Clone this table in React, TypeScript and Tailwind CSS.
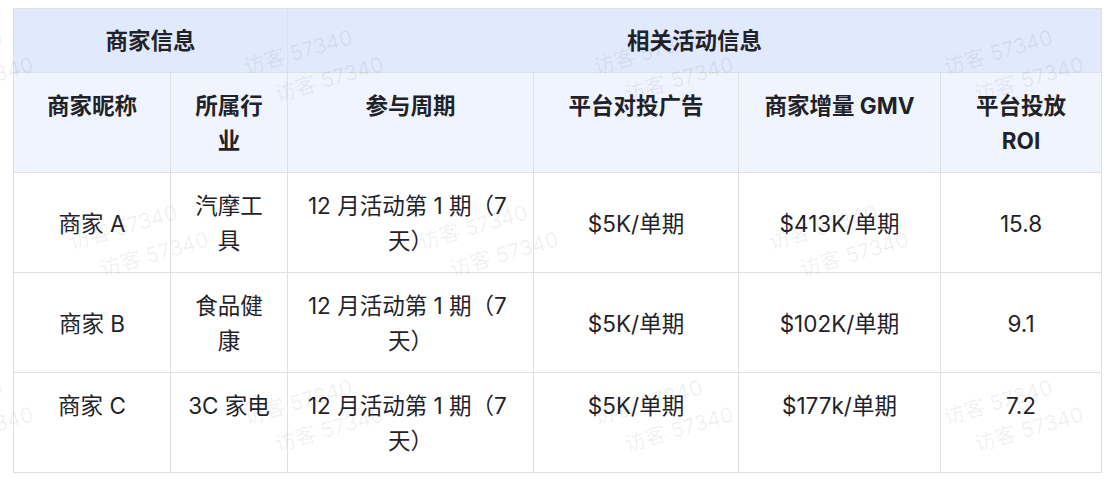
import React from "react";

const rows = [
  {
    name: "商家 A",
    industry: ["汽摩工", "具"],
    ad: "$5K/单期",
    gmv: "$413K/单期",
    roi: "15.8",
    align: "align-middle",
  },
  {
    name: "商家 B",
    industry: ["食品健", "康"],
    ad: "$5K/单期",
    gmv: "$102K/单期",
    roi: "9.1",
    align: "align-middle",
  },
  {
    name: "商家 C",
    industry: ["3C 家电"],
    ad: "$5K/单期",
    gmv: "$177k/单期",
    roi: "7.2",
    align: "align-top",
  },
];

// watermark lattice: staggered every 175px
const marks: { x: number; y: number }[] = [];
for (let i = -3; i <= 6; i++) {
  for (let j = -1; j <= 3; j++) {
    if ((i + j) % 2 !== 0) continue;
    marks.push({ x: 298 + 175 * i, y: 52 + 175 * j });
  }
}

const Watermark = () => (
  <div className="pointer-events-none absolute inset-0 overflow-hidden">
    {marks.map((m, idx) => (
      <React.Fragment key={idx}>
        <span
          className="absolute -translate-x-1/2 -translate-y-1/2 -rotate-[16deg] whitespace-nowrap text-[21px] text-black/[0.065]"
          style={{ left: m.x, top: m.y }}>
          访客 57340
        </span>
        <span
          className="absolute -translate-x-1/2 -translate-y-1/2 -rotate-[16deg] whitespace-nowrap text-[21px] text-black/[0.065]"
          style={{ left: m.x + 31, top: m.y + 27 }}>
          访客 57340
        </span>
      </React.Fragment>
    ))}
  </div>
);

const cell =
  "border border-[#dee0e3] px-4 pt-[15px] pb-[14px] text-center whitespace-nowrap";

const App = () => {
  return (
    <div
      className="relative h-[485px] w-[1107px] overflow-hidden bg-white pl-[13px] pt-[8px] text-[22.5px] leading-[35px] text-[#1f2329]"
      style={{ fontFamily: 'Inter, "Noto Sans CJK SC", sans-serif' }}>
      <table className="w-[1088px] table-fixed border-collapse">
        <colgroup>
          <col className="w-[157px]" />
          <col className="w-[117px]" />
          <col className="w-[246px]" />
          <col className="w-[205px]" />
          <col className="w-[202px]" />
          <col className="w-[161px]" />
        </colgroup>
        <thead>
          <tr className="bg-[#e1eafd] font-bold">
            <th colSpan={2} className={`${cell} !pt-[14px] align-middle`}>
              商家信息
            </th>
            <th colSpan={4} className={`${cell} !pt-[14px] align-middle`}>
              相关活动信息
            </th>
          </tr>
          <tr className="bg-[#f0f4fe] font-bold">
            <th className={`${cell} align-top`}>商家昵称</th>
            <th className={`${cell} align-top`}>
              所属行
              <br />业
            </th>
            <th className={`${cell} align-top`}>参与周期</th>
            <th className={`${cell} align-top`}>平台对投广告</th>
            <th className={`${cell} align-top`}>商家增量 GMV</th>
            <th className={`${cell} align-top`}>
              平台投放
              <br />
              ROI
            </th>
          </tr>
        </thead>
        <tbody>
          {rows.map((row) => (
            <tr key={row.name}>
              <td className={`${cell} ${row.align}`}>{row.name}</td>
              <td className={`${cell} ${row.align}`}>
                {row.industry.map((line, i) => (
                  <div key={i}>{line}</div>
                ))}
              </td>
              <td className={`${cell} ${row.align}`}>
                12 月活动第 1 期（7&nbsp;
                <br />
                天）
              </td>
              <td className={`${cell} ${row.align}`}>{row.ad}</td>
              <td className={`${cell} ${row.align}`}>{row.gmv}</td>
              <td className={`${cell} ${row.align}`}>{row.roi}</td>
            </tr>
          ))}
        </tbody>
      </table>
      <Watermark />
    </div>
  );
};

export default App;
